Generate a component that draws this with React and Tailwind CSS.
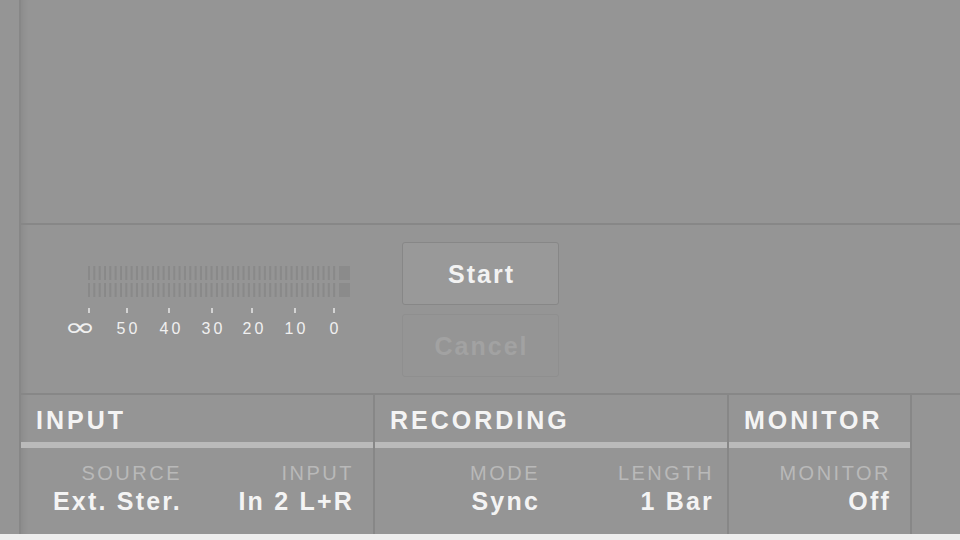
import React from 'react';

const ticks = [
  { label: '∞', tick: 23, x: 14 },
  { label: '50', tick: 61, x: 61 },
  { label: '40', tick: 103, x: 104 },
  { label: '30', tick: 146, x: 146 },
  { label: '20', tick: 186, x: 187 },
  { label: '10', tick: 229, x: 229 },
  { label: '0', tick: 268, x: 268 },
];

const SEGMENTS = 47;

const sections = [
  {
    title: 'INPUT',
    width: 'w-[352px]',
    fields: [
      { label: 'SOURCE', value: 'Ext. Ster.', pad: 'pr-[15px]' },
      { label: 'INPUT', value: 'In 2 L+R', pad: 'pr-[19px]' },
    ],
  },
  {
    title: 'RECORDING',
    width: 'w-[352px]',
    fields: [
      { label: 'MODE', value: 'Sync', pad: 'pr-[11px]' },
      { label: 'LENGTH', value: '1 Bar', pad: 'pr-[13px]' },
    ],
  },
  {
    title: 'MONITOR',
    width: 'w-[181px]',
    fields: [{ label: 'MONITOR', value: 'Off', pad: 'pr-[14px]' }],
  },
];

function LevelMeter() {
  return (
    <div className="relative w-[286px] h-[74px]">
      <svg width="286" height="50" className="block">
        {[0, 17].map((y) => (
          <g key={y}>
            {Array.from({ length: SEGMENTS }, (_, i) => (
              <rect key={i} x={22 + i * 5.33} y={y + 1} width="2" height="14" fill="#898989" />
            ))}
            <rect x="273" y={y + 1} width="11" height="14" fill="#8b8b8b" />
          </g>
        ))}
        {ticks.map((t) => (
          <rect key={t.label} x={t.tick - 0.75} y="43" width="1.5" height="5" fill="#e8e8e8" />
        ))}
      </svg>
      {ticks.map((t) => (
        <span
          key={t.label}
          className={
            t.label === '∞'
              ? "absolute top-[50px] -translate-x-1/2 scale-x-[1.6] scale-y-[1.1] text-[24px] leading-[24px] text-[#f0f0f0] font-['DejaVu_Sans',sans-serif]"
              : 'absolute top-[56px] -translate-x-1/2 pl-[3px] text-[16px] leading-[16px] tracking-[3px] text-[#f0f0f0]'
          }
          style={{ left: t.x }}
        >
          {t.label}
        </span>
      ))}
    </div>
  );
}

function Section({ title, width, fields }) {
  return (
    <div className={`${width} flex flex-col`}>
      <div className="h-[47px] pt-[13px] pl-[15px] text-[25px] leading-[25px] font-bold tracking-[3px] text-[#f4f4f4]">
        {title}
      </div>
      <div className="h-[6px] bg-[#bababa]" />
      <div className="flex-1 flex">
        {fields.map((f) => (
          <div key={f.label} className={`w-[176px] pt-[15px] text-right ${f.pad}`}>
            <div className="text-[20px] leading-[21px] tracking-[2.5px] text-[#b9b9b9]">{f.label}</div>
            <div className="mt-[4px] text-[25px] leading-[26px] font-bold tracking-[2.2px] text-[#f4f4f4]">
              {f.value}
            </div>
          </div>
        ))}
      </div>
    </div>
  );
}

export default function App() {
  return (
    <div className="w-[960px] h-[540px] bg-[#959595] flex flex-col font-['Liberation_Sans',Arial,sans-serif]">
      <div className="flex-1 flex">
        <div className="w-[19px]" />
        <div className="w-[2px] bg-[#878787]" />
        <div className="flex-1 flex flex-col shadow-[inset_8px_0_6px_-6px_rgba(0,0,0,0.08)]">
          <div className="h-[223px]" />
          <div className="h-[2px] bg-[#878787]" />

          <div className="h-[168px] flex items-start pt-[17px] pl-[45px]">
            <div className="mt-[23px]">
              <LevelMeter />
            </div>
            <div className="ml-[50px] w-[157px] flex flex-col gap-[9px]">
              <button className="h-[63px] rounded-[3px] border border-[#878787] bg-[#999999] pl-[2px] flex items-center justify-center text-[25px] leading-[26px] font-bold tracking-[2px] text-[#f2f2f2]">
                Start
              </button>
              <button className="h-[63px] rounded-[3px] border border-[#8f8f8f] pl-[2px] flex items-center justify-center text-[25px] leading-[26px] font-bold tracking-[2px] text-[#a2a2a2]">
                Cancel
              </button>
            </div>
          </div>

          <div className="h-[2px] bg-[#878787]" />
          <div className="flex-1 flex">
            {sections.map((s) => (
              <React.Fragment key={s.title}>
                <Section {...s} />
                <div className="w-[2px] bg-[#878787]" />
              </React.Fragment>
            ))}
            <div className="flex-1" />
          </div>
        </div>
      </div>
      <div className="h-[6px] bg-[#eeeeee]" />
    </div>
  );
}
